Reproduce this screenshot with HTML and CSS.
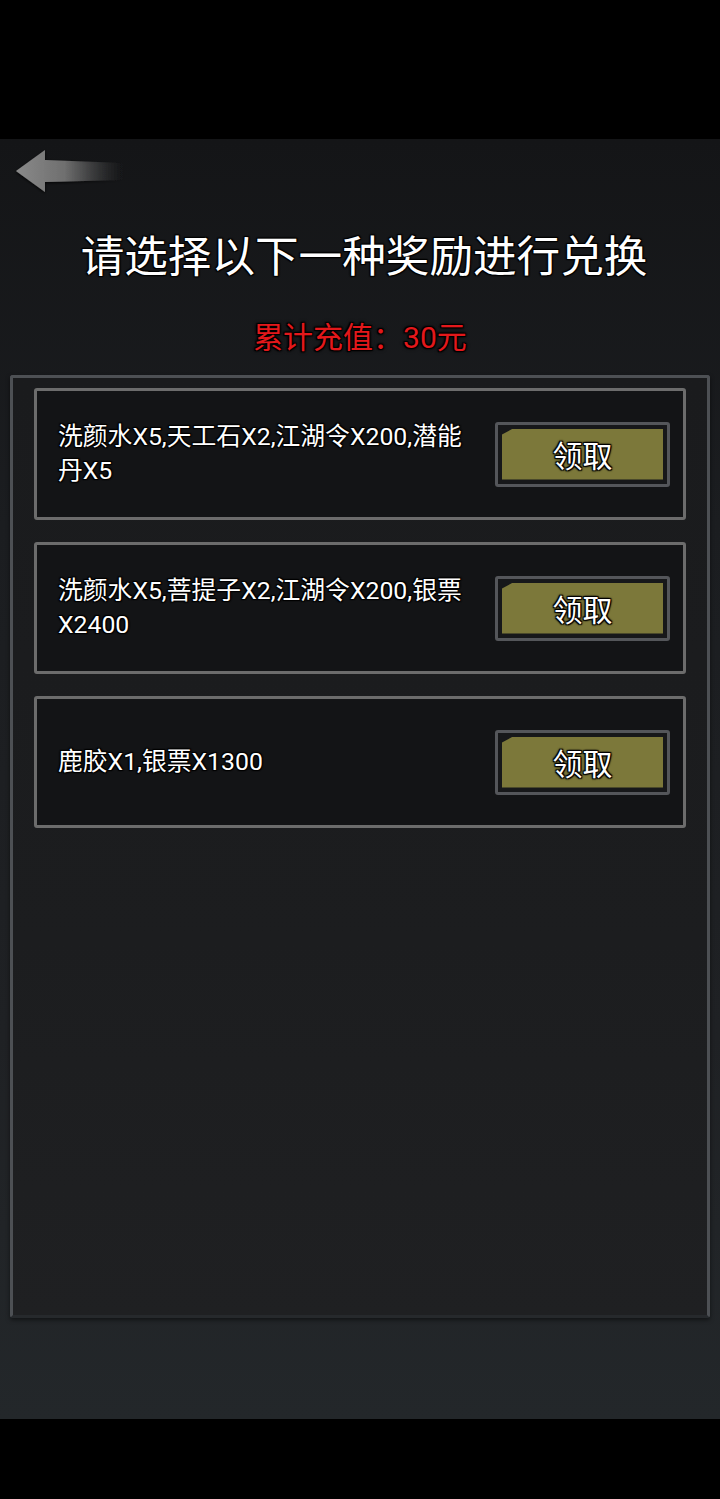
FILE: index.html
```html
<!DOCTYPE html>
<html lang="zh-CN">
<head>
<meta charset="utf-8">
<title>兑换奖励</title>
<link rel="stylesheet" href="styles.css">
</head>
<body>
<div class="topbar"></div>
<main class="screen">
  <div class="back-row">
    <svg class="back" width="110" height="46" viewBox="0 0 110 46">
      <defs>
        <linearGradient id="tail" x1="0" y1="0" x2="1" y2="0">
          <stop offset="0" stop-color="#8a8a8a"/>
          <stop offset="0.45" stop-color="#6f6f6f"/>
          <stop offset="1" stop-color="#3a3b3d" stop-opacity="0"/>
        </linearGradient>
        <filter id="sh" x="-20%" y="-30%" width="140%" height="160%">
          <feDropShadow dx="0" dy="1" stdDeviation="1.5" flood-color="#000" flood-opacity="0.9"/>
        </filter>
      </defs>
      <path d="M2 22 L31 1 L31 11 L110 14 L110 31 L31 33 L31 43 Z" fill="url(#tail)" filter="url(#sh)"/>
    </svg>
  </div>
  <h1 class="title">请选择以下一种奖励进行兑换</h1>
  <p class="total">累计充值：30元</p>
  <section class="panel">
    <div class="card">
      <p class="desc">洗颜水X5,天工石X2,江湖令X200,潜能丹X5</p>
      <button class="claim"><span class="fill">领取</span></button>
    </div>
    <div class="card">
      <p class="desc">洗颜水X5,菩提子X2,江湖令X200,银票X2400</p>
      <button class="claim"><span class="fill">领取</span></button>
    </div>
    <div class="card">
      <p class="desc">鹿胶X1,银票X1300</p>
      <button class="claim"><span class="fill">领取</span></button>
    </div>
  </section>
</main>
<div class="bottombar"></div>
</body>
</html>
```

FILE: styles.css
```css
* { box-sizing: border-box; }
html, body { margin: 0; padding: 0; background: #000; }
body {
  width: 720px;
  height: 1499px;
  overflow: hidden;
  font-family: Roboto, "Noto Sans CJK SC", sans-serif;
  color: #fff;
}
.topbar { height: 139px; background: #000; }
.bottombar { height: 80px; background: #000; }
.screen {
  height: 1280px;
  display: flex;
  flex-direction: column;
  align-items: stretch;
  background: linear-gradient(180deg, #141517 0%, #1b1d20 30%, #1f2124 70%, #23272a 100%);
}
.back-row {
  height: 46px;
  margin-top: 10px;
  padding-left: 14px;
  display: flex;
  align-items: center;
}
.back { display: block; }
.title {
  margin: 35px 0 0;
  padding-left: 8px;
  height: 56px;
  line-height: 56px;
  font-size: 43.6px;
  font-weight: 400;
  text-align: center;
  text-shadow: 0 0 2px #000, 1px 1px 1px #000, -1px -1px 1px #000, 1px -1px 1px #000, -1px 1px 1px #000;
}
.total {
  margin: 32px 0 0;
  height: 40px;
  line-height: 40px;
  font-size: 30px;
  text-align: center;
  color: #e3181b;
  text-shadow: 0 0 2px #000, 1px 1px 1px #000, -1px -1px 1px #000, 1px -1px 1px #000, -1px 1px 1px #000, 0 0 4px #000;
}
.panel {
  margin: 17px 0 0 10px;
  width: 700px;
  height: 943px;
  border: 3px solid #4d5054;
  border-bottom-color: #26292c;
  border-radius: 3px;
  background: linear-gradient(180deg, #1a1b1d 0%, #1c1d1f 60%, #1f2022 100%);
  box-shadow: 0 2px 4px rgba(0,0,0,0.5);
  padding: 10px 0 0 21px;
  display: flex;
  flex-direction: column;
  gap: 22px;
}
.card {
  width: 652px;
  height: 132px;
  border: 3px solid #6c6c6c;
  border-radius: 3px;
  background: #131416;
  display: flex;
  align-items: center;
  padding: 0 13px 0 21px;
}
.desc {
  margin: 0;
  flex: 0 0 412px;
  font-size: 24.8px;
  line-height: 34px;
  color: #fff;
  text-shadow: 0 0 2px #000, 1px 1px 1px #000, -1px -1px 1px #000, 1px -1px 1px #000, -1px 1px 1px #000;
}
.claim {
  margin-left: auto;
  width: 175px;
  height: 65px;
  padding: 4px;
  border: 3px solid #54565a;
  border-radius: 3px;
  background: #17181a;
  font-family: inherit;
  display: flex;
}
.fill {
  flex: 1;
  display: flex;
  align-items: center;
  justify-content: center;
  background: #7c783a;
  clip-path: polygon(11px 0, 100% 0, 100% 100%, 0 100%, 0 6px);
  color: #fff;
  font-size: 30px;
  text-shadow: 0 0 2px #000, 1px 1px 1px #000, -1px -1px 1px #000, 1px -1px 1px #000, -1px 1px 1px #000, 0 0 3px #000;
}
```
